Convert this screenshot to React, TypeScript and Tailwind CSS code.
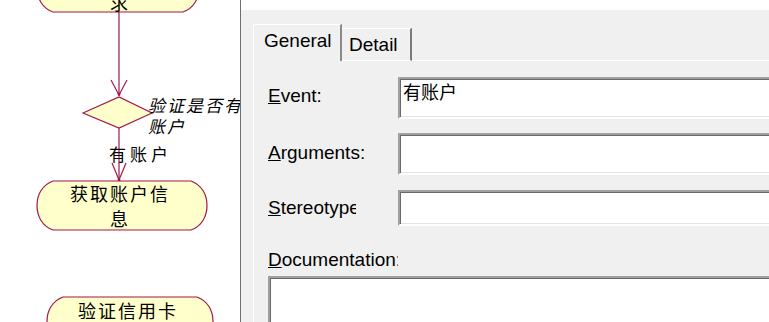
import React from "react";

const STROKE = "#a3174d";
const FILL = "#ffffcc";
const CJK = "font-['Noto_Sans_CJK_SC',sans-serif]";
const UI = "font-['Liberation_Sans','Noto_Sans_CJK_SC',sans-serif]";

function activityPath(x1: number, y1: number, x2: number, y2: number) {
    const my = (y1 + y2) / 2;
    return `M${x1 + 16},${y1} L${x2 - 16},${y1} C${x2 - 5},${y1 + 4} ${x2},${y1 + 14} ${x2},${my} C${x2},${y2 - 14} ${x2 - 5},${y2 - 4} ${x2 - 16},${y2} L${x1 + 16},${y2} C${x1 + 5},${y2 - 4} ${x1},${y2 - 14} ${x1},${my} C${x1},${y1 + 14} ${x1 + 5},${y1 + 4} ${x1 + 16},${y1} Z`;
}

function Diagram() {
    return (
        <div className={`relative w-[240px] h-full shrink-0 overflow-hidden bg-white ${CJK}`}>
            <svg width="240" height="322" className="absolute left-0 top-0">
                <path d={activityPath(37, -37, 199, 12)} fill={FILL} stroke={STROKE} strokeWidth="1.2" />
                <line x1="119" y1="12" x2="119" y2="96" stroke={STROKE} strokeWidth="1.2" />
                <path d="M111,80 L119,95 L127,80" fill="none" stroke={STROKE} strokeWidth="1.2" />
                <circle cx="119" cy="94" r="1.5" fill={STROKE} />
                <path d="M83,113 L119,97 L152,113 L119,128 Z" fill={FILL} stroke={STROKE} strokeWidth="1.2" />
                <line x1="119" y1="128" x2="119" y2="181" stroke={STROKE} strokeWidth="1.2" />
                <path d="M112,163 L119,180 L126,163" fill="none" stroke={STROKE} strokeWidth="1.2" />
                <circle cx="119" cy="180" r="1.5" fill={STROKE} />
                <path d={activityPath(37, 181, 207, 230)} fill={FILL} stroke={STROKE} strokeWidth="1.2" />
                <path d={activityPath(47, 297, 213, 346)} fill={FILL} stroke={STROKE} strokeWidth="1.2" />
            </svg>

            <div className="absolute left-0 top-[-10px] w-[238px] text-center text-[18px] leading-[25px] text-black">求</div>
            <div className="absolute left-[148px] top-[94px] w-[100px] text-[17px] leading-[21px] tracking-[2px] italic text-black">
                验证是否有账户
            </div>
            <div className="absolute left-[109px] top-[143px] text-[17px] leading-[22px] tracking-[4px] text-black">有账户</div>
            <div className="absolute left-[64px] top-[181px] w-[112px] text-center text-[18px] leading-[25px] tracking-[2px] text-black">
                获取账户信息
            </div>
            <div className="absolute left-[78px] top-[298px] w-[112px] text-[18px] leading-[25px] tracking-[2px] text-black">
                验证信用卡
            </div>
        </div>
    );
}

function Field({ className = "", children }: { className?: string; children?: React.ReactNode }) {
    return (
        <div
            className={`w-[420px] shrink-0 bg-white border-2 border-t-[#a0a0a0] border-l-[#a0a0a0] border-b-white border-r-white shadow-[inset_1px_1px_0_#696969,inset_-1px_-1px_0_#e3e3e3] ${className}`}
        >
            {children}
        </div>
    );
}

export default function App() {
    return (
        <div className={`flex w-[769px] h-[322px] overflow-hidden bg-white text-black ${UI}`}>
            <Diagram />
            <div className="w-px shrink-0 bg-[#6e6e6e]" />

            <div className="flex-1 min-w-0 flex flex-col overflow-hidden">
                <div className="h-[10px] shrink-0 bg-white" />
                <div className="flex-1 min-h-0 overflow-hidden bg-[#f0f0f0] pl-[12px] pt-[14px]">
                    {/* tabs */}
                    <div className="flex items-end h-[37px]">
                        <div className="w-[89px] h-[37px] border-l border-t border-white border-r-2 border-r-[#8a8a8a] rounded-tl-[2px] pl-[10px] pt-[5px] text-[19px] leading-[22px]">
                            General
                        </div>
                        <div className="w-[70px] h-[33px] border-t border-b border-white border-r-2 border-r-[#7a7a7a] pl-[7px] pt-[5px] text-[19px] leading-[22px]">
                            Detail
                        </div>
                        <div className="flex-1 h-px bg-white" />
                    </div>

                    {/* panel */}
                    <div className="border-l border-white pl-[14px] pt-[16px] text-[19px] leading-[22px]">
                        <div className="flex h-[42px]">
                            <div className="w-[130px] shrink-0 pt-[8px]">
                                <u>E</u>vent:
                            </div>
                            <Field className={`h-[42px] pl-[3px] pt-[1px] text-[18px] leading-[22px] ${CJK}`}>有账户</Field>
                        </div>
                        <div className="flex h-[42px] mt-[14px]">
                            <div className="w-[130px] shrink-0 pt-[9px]">
                                <u>A</u>rguments:
                            </div>
                            <Field className="h-[42px]" />
                        </div>
                        <div className="flex h-[36px] mt-[15px]">
                            <div className="w-[130px] shrink-0 pt-[7px]">
                                <div className="w-[88px] overflow-hidden whitespace-nowrap">
                                    <u>S</u>tereotype
                                </div>
                            </div>
                            <Field className="h-[36px]" />
                        </div>
                        <div className="mt-[23px] w-[130px] overflow-hidden whitespace-nowrap">
                            <u>D</u>ocumentation:
                        </div>
                        <Field className="mt-[5px] h-[80px] w-[560px]" />
                    </div>
                </div>
            </div>
        </div>
    );
}
